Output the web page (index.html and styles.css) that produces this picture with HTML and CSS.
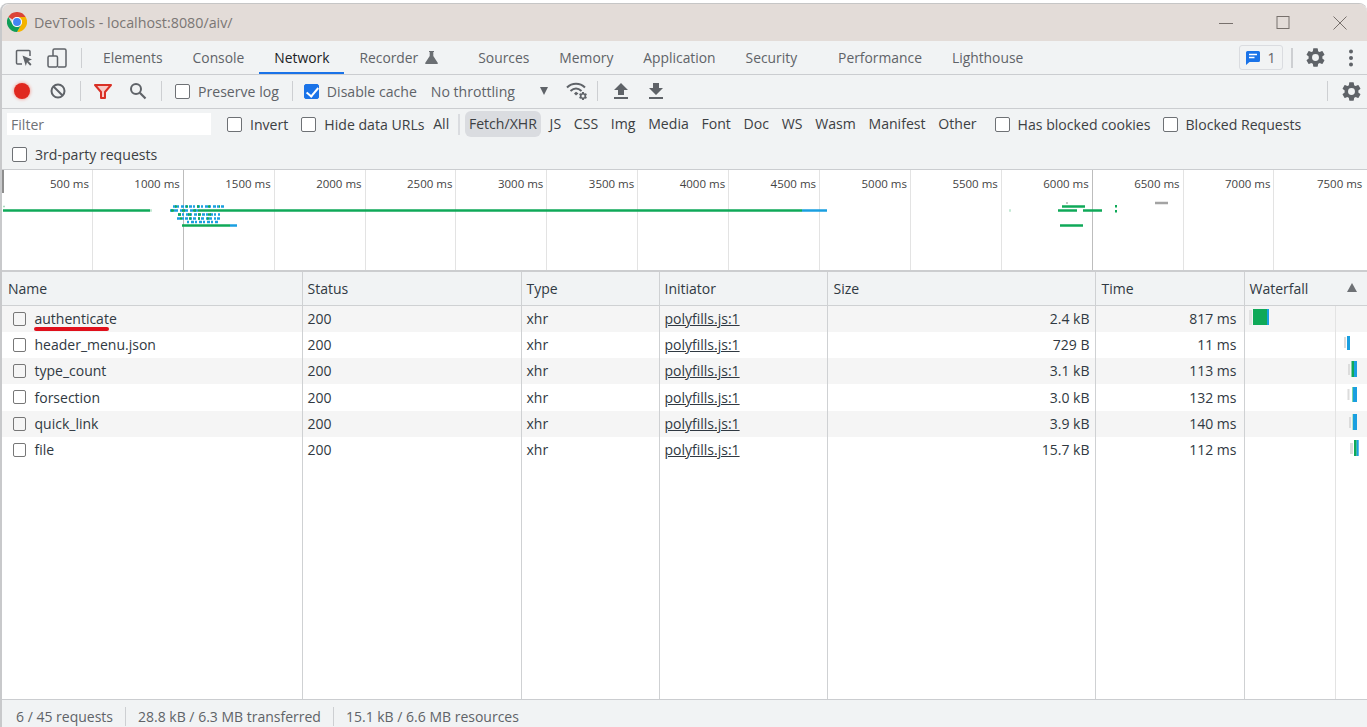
FILE: index.html
```html
<!DOCTYPE html>
<html lang="en">
<head>
  <meta charset="UTF-8" />
  <title>DevTools - localhost:8080/aiv/</title>
  <link rel="stylesheet" href="styles.css">
</head>
<body>
  <svg class="defs" width="0" height="0">
    <symbol id="gear" viewBox="0 0 24 24">
      <path fill-rule="evenodd" d="M19.14 12.94c.04-.3.06-.61.06-.94 0-.32-.02-.64-.07-.94l2.03-1.58a.49.49 0 0 0 .12-.61l-1.92-3.32a.49.49 0 0 0-.59-.22l-2.39.96c-.5-.38-1.03-.7-1.62-.94l-.36-2.54a.48.48 0 0 0-.48-.41h-3.84c-.24 0-.43.17-.47.41l-.36 2.54c-.59.24-1.13.57-1.62.94l-2.39-.96a.48.48 0 0 0-.59.22L2.74 8.87c-.12.21-.08.47.12.61l2.03 1.58c-.05.3-.09.63-.09.94s.02.64.07.94l-2.03 1.58a.49.49 0 0 0-.12.61l1.92 3.32c.12.22.37.29.59.22l2.39-.96c.5.38 1.03.7 1.62.94l.36 2.54c.05.24.24.41.48.41h3.84c.24 0 .44-.17.47-.41l.36-2.54c.59-.24 1.13-.56 1.62-.94l2.39.96c.22.08.47 0 .59-.22l1.92-3.32c.12-.22.07-.47-.12-.61l-2.01-1.58zM12 15.6A3.6 3.6 0 1 1 12 8.4a3.6 3.6 0 0 1 0 7.2z"/>
    </symbol>
  </svg>

  <div class="window">
    <!-- title bar -->
    <header class="titlebar">
      <svg class="chrome-logo" width="20" height="20" viewBox="0 0 48 48">
        <path fill="#db4437" d="M3.2 12A24 24 0 0 1 44.8 12H24A12 12 0 0 0 13.6 18Z"/>
        <path fill="#f4b400" d="M44.8 12A24 24 0 0 1 24 48L34.4 30A12 12 0 0 0 24 12Z"/>
        <path fill="#0f9d58" d="M3.2 12L13.6 30A12 12 0 0 0 34.4 30L24 48A24 24 0 0 1 3.2 12Z"/>
        <circle cx="24" cy="24" r="12" fill="#fff"/>
        <circle cx="24" cy="24" r="9.5" fill="#4285f4"/>
      </svg>
      <span class="title">DevTools - localhost:8080/aiv/</span>
      <div class="win-controls">
        <svg width="14" height="14" viewBox="0 0 14 14"><path d="M0 7.5H14" stroke="#77706c"/></svg>
        <svg width="14" height="14" viewBox="0 0 14 14"><rect x="1" y=".5" width="12" height="12" fill="none" stroke="#77706c"/></svg>
        <svg width="14" height="14" viewBox="0 0 14 14"><path d="M.5 .5L13.5 13.5M13.5 .5L.5 13.5" stroke="#77706c"/></svg>
      </div>
    </header>

    <!-- panel tabs -->
    <nav class="tabbar">
      <svg class="icon-inspect" width="18" height="18" viewBox="0 0 18 18">
        <path d="M7 15H2.500a1 1 0 0 1-1-1V2.500a1 1 0 0 1 1-1H14a1 1 0 0 1 1 1V7" fill="none" stroke="#5f6368" stroke-width="1.500"/>
        <path d="M7.500 6.500L17 10.500 13.300 12 16.500 15.300 15.200 16.700 12 13.300 10.800 17Z" fill="#5f6368"/>
      </svg>
      <svg class="icon-device" width="20" height="20" viewBox="0 0 20 20">
        <path d="M6 8V2.500a1.500 1.500 0 0 1 1.500-1.500h10a1.500 1.500 0 0 1 1.500 1.500V17.500a1.500 1.500 0 0 1-1.500 1.500H11" fill="none" stroke="#5f6368" stroke-width="1.500"/>
        <rect x="1" y="8" width="9.500" height="11" rx="1.500" fill="none" stroke="#5f6368" stroke-width="1.500"/>
      </svg>
      <span class="sep sep-tabs"></span>
      <a class="tab">Elements</a>
      <a class="tab">Console</a>
      <a class="tab active">Network</a>
      <a class="tab tab-recorder">Recorder
        <svg width="13" height="13" viewBox="0 0 13 13"><path d="M4 0H9V1H8.300V5L13 12.200 12.300 13H.700L0 12.200 4.700 5V1H4Z" fill="#6b6f73"/></svg>
      </a>
      <a class="tab">Sources</a>
      <a class="tab">Memory</a>
      <a class="tab">Application</a>
      <a class="tab tab-security">Security</a>
      <a class="tab">Performance</a>
      <a class="tab">Lighthouse</a>
      <div class="tabbar-right">
        <span class="issues">
          <svg width="14" height="14" viewBox="0 0 14 14"><path d="M1.500 0H12.500A1.500 1.500 0 0 1 14 1.500V9.500A1.500 1.500 0 0 1 12.500 11H3.500L0 14V1.500A1.500 1.500 0 0 1 1.500 0Z" fill="#1a73e8"/><path d="M3 3.500H11M3 6.500H8.500" stroke="#fff" stroke-width="1.400"/></svg>
          1
        </span>
        <span class="sep sep-issues"></span>
        <svg class="gear" width="23" height="23"><use href="#gear"/></svg>
        <svg class="kebab" width="6" height="18" viewBox="0 0 6 18"><circle cx="3" cy="2.500" r="2"/><circle cx="3" cy="9" r="2"/><circle cx="3" cy="15.500" r="2"/></svg>
      </div>
    </nav>

    <!-- network toolbar -->
    <div class="toolbar">
      <span class="record"></span>
      <svg class="icon-clear" width="16" height="16" viewBox="0 0 16 16"><circle cx="8" cy="8" r="6.500" fill="none" stroke="#5f6368" stroke-width="2"/><path d="M3.500 3.500L12.500 12.500" stroke="#5f6368" stroke-width="2"/></svg>
      <span class="sep sep-clear"></span>
      <svg class="icon-filter" width="18" height="15" viewBox="0 0 18 15"><path d="M1 1H17L11 8V14H7V8Z" fill="#f8c9c5" stroke="#d93025" stroke-width="2" stroke-linejoin="round"/></svg>
      <svg class="icon-search" width="18" height="18" viewBox="0 0 18 18"><circle cx="7" cy="7" r="5" fill="none" stroke="#5f6368" stroke-width="2"/><path d="M10.800 10.800L16.500 16.500" stroke="#5f6368" stroke-width="2.200"/></svg>
      <span class="sep sep-search"></span>
      <label class="check check-preserve"><input type="checkbox">Preserve log</label>
      <span class="sep sep-preserve"></span>
      <label class="check check-cache"><input type="checkbox" checked>Disable cache</label>
      <span class="throttle">No throttling</span>
      <span class="caret"></span>
      <svg class="icon-wifi" width="22" height="18" viewBox="0 0 22 18">
        <path d="M1 5.500C6 .500 14 .500 19 5.500M4.500 9C8 5.800 12 5.800 15.500 9" fill="none" stroke="#5f6368" stroke-width="2"/>
        <path d="M8 11.500L10 9.800 12.500 11.500 10 13.500Z" fill="#5f6368"/>
        <use href="#gear" x="12" y="9" width="10" height="10" fill="#5f6368"/>
      </svg>
      <span class="sep sep-wifi"></span>
      <svg class="icon-arrow icon-up" width="14" height="16" viewBox="0 0 14 16"><path d="M7 0L14 7H10V12H4V7H0Z M0 14H14V16H0Z" fill="#5f6368"/></svg>
      <svg class="icon-arrow icon-down" width="14" height="16" viewBox="0 0 14 16"><path d="M4 0H10V5H14L7 12 0 5H4Z M0 14H14V16H0Z" fill="#5f6368"/></svg>
      <div class="toolbar-right">
        <span class="sep"></span>
        <svg class="gear" width="23" height="23"><use href="#gear"/></svg>
      </div>
    </div>

    <!-- filter bar -->
    <div class="filters">
      <div class="filter-row">
        <input class="filter-input" placeholder="Filter">
        <label class="check check-invert"><input type="checkbox">Invert</label>
        <label class="check check-hide"><input type="checkbox">Hide data URLs</label>
        <span class="type">All</span>
        <span class="type-sep"></span>
        <span class="type selected">Fetch/XHR</span>
        <span class="type">JS</span>
        <span class="type">CSS</span>
        <span class="type">Img</span>
        <span class="type">Media</span>
        <span class="type">Font</span>
        <span class="type">Doc</span>
        <span class="type">WS</span>
        <span class="type">Wasm</span>
        <span class="type">Manifest</span>
        <span class="type">Other</span>
        <label class="check check-cookies"><input type="checkbox">Has blocked cookies</label>
        <label class="check check-blocked"><input type="checkbox">Blocked Requests</label>
      </div>
      <div class="filter-row second">
        <label class="check"><input type="checkbox">3rd-party requests</label>
      </div>
    </div>

    <!-- overview timeline -->
    <div class="overview">
      <div class="tick">500 ms</div>
      <div class="tick range">1000 ms</div>
      <div class="tick">1500 ms</div>
      <div class="tick">2000 ms</div>
      <div class="tick">2500 ms</div>
      <div class="tick">3000 ms</div>
      <div class="tick">3500 ms</div>
      <div class="tick">4000 ms</div>
      <div class="tick">4500 ms</div>
      <div class="tick">5000 ms</div>
      <div class="tick">5500 ms</div>
      <div class="tick range">6000 ms</div>
      <div class="tick">6500 ms</div>
      <div class="tick">7000 ms</div>
      <div class="tick last">7500 ms</div>
      <span class="handle"></span>
      <svg class="overview-bars" width="1367" height="100" viewBox="0 170 1367 100">
        <g stroke-width="2.500">
          <path d="M3 206.500H5" stroke="#a8dcc0" stroke-width="1.500"/>
          <path d="M3 210.500H150" stroke="#0fa958"/>
          <path d="M150 210.500H152" stroke="#bfe7d0"/>
          <path d="M198 210.500H802" stroke="#0fa958"/>
          <path d="M802 210.500H827" stroke="#1a9fe0"/>

          <path d="M173 206.500H224" stroke="#1a9fe0" stroke-dasharray="3 1 2 2"/>
          <path d="M175 206.500H220" stroke="#0fa958" stroke-dasharray="2 9"/>
          <path d="M170 210.500H198" stroke="#1a9fe0" stroke-dasharray="3 1 4 2"/>
          <path d="M171 210.500H198" stroke="#0fa958" stroke-dasharray="3 8"/>
          <path d="M178 214.500H220" stroke="#1a9fe0" stroke-dasharray="3 1 2 2"/>
          <path d="M178 214.500H212" stroke="#0fa958" stroke-dasharray="3 7"/>
          <path d="M177 218.500H220" stroke="#1a9fe0" stroke-dasharray="3 2 2 1"/>
          <path d="M180 218.500H212" stroke="#0fa958" stroke-dasharray="2 7"/>
          <path d="M187 222H219" stroke="#1a9fe0" stroke-dasharray="2 2 3 1"/>
          <path d="M182 225.500H230" stroke="#0fa958"/>
          <path d="M230 225.500H237" stroke="#1a9fe0"/>

          <path d="M1062 206.500H1085" stroke="#0fa958"/>
          <path d="M1058 210.500H1077" stroke="#0fa958"/>
          <path d="M1083 210.500H1102" stroke="#0fa958"/>
          <path d="M1060 225.500H1083" stroke="#0fa958"/>
          <path d="M1116 205V207.500M1116 210V212.500" stroke="#0fa958" stroke-width="2"/>
          <path d="M1155 203H1168" stroke="#a3a3a3"/>
          <path d="M1066 203H1068" stroke="#b5b5b5" stroke-width="1.500"/>
          <path d="M1009 210.500H1011" stroke="#c3e9d5"/>
        </g>
      </svg>
    </div>

    <!-- request table -->
    <table class="requests">
      <colgroup>
        <col class="c-name"><col class="c-status"><col class="c-type"><col class="c-init"><col class="c-size"><col class="c-time"><col class="c-fall">
      </colgroup>
      <thead>
        <tr>
          <th>Name</th><th>Status</th><th>Type</th><th>Initiator</th><th>Size</th><th>Time</th>
          <th class="fall-head">Waterfall<span class="sort-up"></span></th>
        </tr>
      </thead>
      <tbody>
        <tr>
          <td><span class="name"><i class="box"></i><span class="marked">authenticate</span></span></td>
          <td>200</td><td>xhr</td><td><a>polyfills.js:1</a></td><td class="num">2.4 kB</td><td class="num t">817 ms</td>
          <td class="fall"><svg width="123" height="26"><rect x="5" y="4" width="3" height="15" fill="#e2e2e2"/><rect x="9" y="3" width="14" height="16" fill="#0fa958"/><rect x="23" y="3" width="2" height="16" fill="#1a9fe0"/></svg></td>
        </tr>
        <tr>
          <td><span class="name"><i class="box"></i>header_menu.json</span></td>
          <td>200</td><td>xhr</td><td><a>polyfills.js:1</a></td><td class="num">729 B</td><td class="num t">11 ms</td>
          <td class="fall"><svg width="123" height="26"><rect x="100" y="5" width="2" height="11" fill="#dcdcdc"/><rect x="103" y="4" width="3" height="14" fill="#1a9fe0"/></svg></td>
        </tr>
        <tr>
          <td><span class="name"><i class="box"></i>type_count</span></td>
          <td>200</td><td>xhr</td><td><a>polyfills.js:1</a></td><td class="num">3.1 kB</td><td class="num t">113 ms</td>
          <td class="fall"><svg width="123" height="26"><rect x="104" y="6" width="2" height="11" fill="#dcdcdc"/><rect x="107.500" y="3" width="2.500" height="16" fill="#0fa958"/><rect x="110" y="3" width="3" height="16" fill="#1a9fe0"/></svg></td>
        </tr>
        <tr>
          <td><span class="name"><i class="box"></i>forsection</span></td>
          <td>200</td><td>xhr</td><td><a>polyfills.js:1</a></td><td class="num">3.0 kB</td><td class="num t">132 ms</td>
          <td class="fall"><svg width="123" height="26"><rect x="103.500" y="5" width="2" height="11" fill="#dcdcdc"/><rect x="108" y="3" width="1" height="15" fill="#7fd8a8"/><rect x="109" y="3" width="4" height="15" fill="#1a9fe0"/></svg></td>
        </tr>
        <tr>
          <td><span class="name"><i class="box"></i>quick_link</span></td>
          <td>200</td><td>xhr</td><td><a>polyfills.js:1</a></td><td class="num">3.9 kB</td><td class="num t">140 ms</td>
          <td class="fall"><svg width="123" height="26"><rect x="105" y="6" width="2" height="11" fill="#dcdcdc"/><rect x="108.500" y="3" width="1" height="16" fill="#7fd8a8"/><rect x="109" y="3" width="4" height="16" fill="#1a9fe0"/></svg></td>
        </tr>
        <tr>
          <td><span class="name"><i class="box"></i>file</span></td>
          <td>200</td><td>xhr</td><td><a>polyfills.js:1</a></td><td class="num">15.7 kB</td><td class="num t">112 ms</td>
          <td class="fall"><svg width="123" height="26"><rect x="106" y="6" width="3" height="11" fill="#dcdcdc"/><rect x="110" y="3" width="2.700" height="16" fill="#0fa958"/><rect x="112.700" y="3" width="2" height="16" fill="#1a9fe0"/></svg></td>
        </tr>
        <tr class="filler">
          <td></td><td></td><td></td><td></td><td></td><td></td><td class="fall"></td>
        </tr>
      </tbody>
    </table>

    <!-- status bar -->
    <footer class="statusbar">
      <span>6 / 45 requests</span>
      <span>28.8 kB / 6.3 MB transferred</span>
      <span>15.1 kB / 6.6 MB resources</span>
    </footer>
  </div>
</body>
</html>
```

FILE: styles.css
```css
* { margin: 0; padding: 0; box-sizing: border-box; }

html, body {
  width: 1367px;
  height: 727px;
  overflow: hidden;
  background: #fff;
}

body {
  font-family: "Open Sans", "Noto Sans", sans-serif;
  font-size: 14px;
  color: #3c4043;
}

.defs { position: absolute; }

.window {
  height: 727px;
  margin-top: 3px;
  padding-bottom: 3px;
  display: flex;
  flex-direction: column;
  border-top: 1px solid #c6c6c6;
  border-left: 2px solid #c8c9cb;
  border-top-left-radius: 8px;
  border-top-right-radius: 8px;
  background: #f1f3f4;
}

/* title bar */
.titlebar {
  height: 37px;
  flex: none;
  display: flex;
  align-items: center;
  padding-left: 5px;
  background: #e3dcd8;
  border-top-left-radius: 8px;
  border-top-right-radius: 8px;
}

.chrome-logo { margin-top: -1px; }

.title {
  margin-left: 7px;
  font-size: 14.3px;
  color: #7b7775;
}

.win-controls {
  margin-left: auto;
  padding-right: 20px;
  display: flex;
  gap: 43px;
}

/* tabs */
.tabbar {
  height: 34px;
  flex: none;
  display: flex;
  align-items: stretch;
  border-bottom: 1px solid #cbcdd0;
}

.tabbar > svg { align-self: center; }

.icon-inspect { margin-left: 13px; }
.icon-device { margin-left: 14px; }

.sep {
  width: 1px;
  height: 20px;
  align-self: center;
  background: #cdcfd2;
  flex: none;
}

.sep-tabs { margin: 0 6px 0 14px; }

.tab {
  padding: 0 15px;
  display: flex;
  align-items: center;
  gap: 7px;
  font-size: 13.850px;
  color: #5f6368;
  border-bottom: 2px solid transparent;
  border-top: 2px solid transparent;
}

.tab.active {
  color: #202124;
  border-bottom-color: #1a73e8;
}

.tab-recorder { margin-right: 10px; }
.tab-security { margin-right: 11px; }

.tabbar-right {
  margin-left: auto;
  padding-right: 13px;
  display: flex;
  align-items: center;
}

.issues {
  width: 44px;
  height: 25px;
  display: flex;
  align-items: center;
  justify-content: center;
  gap: 7px;
  border: 1px solid #dadce0;
  border-radius: 3px;
  color: #5f6368;
}

.sep-issues { margin: 0 11px 0 8px; width: 2px; }

.gear { fill: #5f6368; }

.kebab { margin-left: 21px; fill: #5f6368; }

/* toolbar */
.toolbar {
  height: 34px;
  flex: none;
  display: flex;
  align-items: center;
  padding-bottom: 1px;
  font-size: 14.100px;
  border-bottom: 1px solid #cbcdd0;
  color: #5f6368;
}

.record {
  width: 16px;
  height: 16px;
  margin-left: 12px;
  border-radius: 50%;
  background: #e0281f;
  box-shadow: 0 0 3px 1px #f3b3ad;
}

.icon-clear { margin-left: 20px; }
.sep-clear { margin-left: 14px; }
.icon-filter { margin-left: 13px; }
.icon-search { margin-left: 17px; }
.sep-search { margin-left: 14px; }
.check-preserve { margin-left: 13px; gap: 6px; }
.sep-preserve { margin-left: 13px; }
.check-cache { margin-left: 11px; }
.throttle { margin-left: 14px; }

.caret {
  margin-left: 25px;
  border-left: 4px solid transparent;
  border-right: 4px solid transparent;
  border-top: 8px solid #5f6368;
}

.icon-wifi { margin-left: 18px; }
.sep-wifi { margin-left: 9px; }
.icon-up { margin-left: 16px; }
.icon-down { margin-left: 21px; }

.toolbar-right {
  margin-left: auto;
  padding-right: 4px;
  display: flex;
  align-items: center;
  gap: 12px;
}

/* checkboxes */
.check {
  display: flex;
  align-items: center;
  gap: 8px;
  white-space: nowrap;
}

.check input {
  appearance: none;
  width: 15px;
  height: 15px;
  flex: none;
  position: relative;
  border: 1px solid #6e7175;
  border-radius: 2px;
  background: #fff;
}

.check input:checked {
  background: #1a73e8;
  border-color: #1a73e8;
}

.check input:checked::after {
  content: '';
  position: absolute;
  left: 4px;
  top: 0;
  width: 5px;
  height: 10px;
  border: solid #fff;
  border-width: 0 2px 2px 0;
  transform: rotate(40deg);
}

/* filter bar */
.filters {
  height: 61px;
  flex: none;
  border-bottom: 1px solid #cbcdd0;
}

.filter-row {
  height: 30px;
  display: flex;
  align-items: center;
  font-size: 14.100px;
  color: #3c4043;
  white-space: nowrap;
}

.filter-row.second {
  padding: 1px 0 0 10px;
}

.filter-input {
  width: 204px;
  height: 22px;
  margin-left: 5px;
  padding-left: 4px;
  border: 0;
  outline: 0;
  background: #fff;
  font: inherit;
}

.filter-input::placeholder { color: #6f7276; opacity: 1; }

.check-invert { margin-left: 16px; }
.check-hide { margin-left: 13px; }

.type {
  margin-left: 4.700px;
  padding: 0 4px;
  line-height: 26px;
  border-radius: 6px;
}

.type-sep {
  width: 2px;
  height: 21px;
  margin-left: 5px;
  background: #dadce0;
}

.type.selected { background: #dadce0; }

.check-cookies { margin-left: 14px; }
.check-blocked { margin-left: 12px; }

/* overview */
.overview {
  height: 102px;
  flex: none;
  position: relative;
  display: flex;
  overflow: hidden;
  background: #fff;
  border-bottom: 2px solid #cccdcf;
}

.tick {
  width: 90.900px;
  flex: none;
  padding: 5px 3px 0 0;
  text-align: right;
  font-size: 11.500px;
  line-height: 18px;
  color: #444;
  border-right: 1px solid #e3e3e3;
}

.tick.range { border-right-color: #bdbdbd; }
.tick.last { border-right: 0; }

.handle {
  position: absolute;
  left: 0;
  top: 0;
  width: 2px;
  height: 23px;
  background: #8e8e8e;
}

.overview-bars {
  position: absolute;
  left: -2px;
  top: 0;
}

/* table */
.requests {
  flex: 1;
  width: 1365px;
  table-layout: fixed;
  border-collapse: collapse;
  background: #fff;
  height: 427px;
}

.c-name { width: 300px; }
.c-status { width: 219px; }
.c-type { width: 138px; }
.c-init { width: 168px; }
.c-size { width: 268px; }
.c-time { width: 149px; }

.requests th {
  height: 33px;
  padding-left: 5px;
  text-align: left;
  font-weight: 400;
  color: #303942;
  background: #f1f3f4;
  border-right: 1px solid #cfd1d3;
  border-bottom: 1px solid #cfd1d3;
}

.requests th:nth-child(1),
.requests th:nth-child(5),
.requests th:nth-child(6) { padding-left: 6px; }

.requests td {
  height: 26px;
  padding: 0 5px;
  color: #303942;
  white-space: nowrap;
  border-right: 1px solid #cfd1d3;
}

.requests tbody tr:nth-child(4) td { height: 27px; }

.requests th:last-child,
.requests td:last-child { border-right: 0; }

.requests tbody tr:nth-child(odd) td { background-color: #f5f5f5; }
.requests tbody tr.filler td { height: auto; background-color: #fff; }

.requests a { text-decoration: underline; }

.requests td.num { text-align: right; }
.requests td.t { padding-right: 7px; }

.requests td.fall {
  padding: 0;
  background-image: linear-gradient(#e3e3e3, #e3e3e3);
  background-size: 1px 100%;
  background-position: 90px 0;
  background-repeat: no-repeat;
}

.requests td.fall svg { display: block; margin-left: -1px; }

.fall-head { position: relative; }

.sort-up {
  position: absolute;
  right: 10px;
  top: 11px;
  border-left: 5px solid transparent;
  border-right: 5px solid transparent;
  border-bottom: 9px solid #6e7175;
}

.name {
  display: flex;
  align-items: center;
  gap: 8.500px;
  padding-left: 6px;
}

.box {
  width: 13px;
  height: 14px;
  border: 1px solid #777;
  border-radius: 2px;
  flex: none;
}

.marked { position: relative; }

.marked::after {
  content: '';
  position: absolute;
  left: -1px;
  right: 8px;
  bottom: -3px;
  height: 4px;
  border-radius: 2px;
  background: #e0101c;
}

/* status bar */
.statusbar {
  height: 28px;
  flex: none;
  display: flex;
  align-items: flex-start;
  padding: 7px 0 0 2px;
  color: #5f6368;
  border-top: 1px solid #cbcdd0;
}

.statusbar span { padding: 0 12px; line-height: 19px; border-right: 1px solid #cdcfd2; }
.statusbar span:last-child { border-right: 0; }
```
